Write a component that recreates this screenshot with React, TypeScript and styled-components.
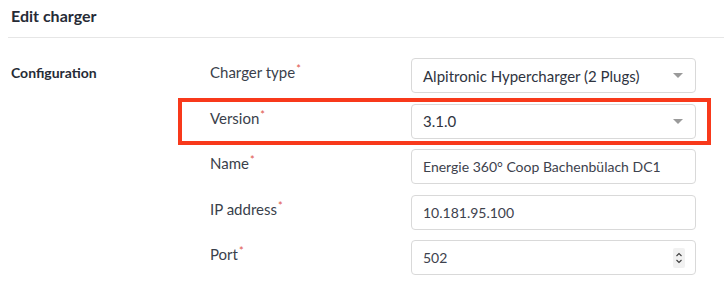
import React from "react";
import styled, { createGlobalStyle, css } from "styled-components";

const Global = createGlobalStyle`
  html, body { margin: 0; padding: 0; background: #ffffff; }
  body { font-family: Lato, "Noto Sans", sans-serif; color: #2a2f3a; }
  * { box-sizing: border-box; }
`;

const Page = styled.div`
  width: 724px;
  height: 289px;
  overflow: hidden;
  background: #fff;
`;

const Header = styled.div`
  margin-left: 8px;
  height: 38px;
  border-bottom: 1px solid #e6e6e6;
  padding: 6px 0 0 3px;
`;

const Title = styled.h1`
  margin: 0;
  font-size: 16px;
  font-weight: 700;
  line-height: 20px;
  color: #262b36;
`;

const Body = styled.div`
  display: grid;
  grid-template-columns: 184px 521px;
  padding-top: 20px;
`;

const SectionTitle = styled.div`
  padding: 6px 0 0 11px;
  font-size: 14px;
  font-weight: 700;
  line-height: 18px;
  color: #262b36;
`;

const Fields = styled.div`
  display: flex;
  flex-direction: column;
  gap: 10.5px;
`;

const Row = styled.div<{ $highlight?: boolean }>`
  display: grid;
  grid-template-columns: 227px 285px;
  height: 35px;
  ${(p) =>
    p.$highlight &&
    css`
      outline: 4px solid #f8391b;
      outline-offset: 2px;
    `}
`;

const Label = styled.label`
  padding: 4px 0 0 26px;
  font-size: 15px;
  line-height: 20px;
  color: #3a3f4b;
`;

const Req = styled.span`
  color: #e0544a;
  font-size: 11px;
  vertical-align: top;
  position: relative;
  top: -3px;
  margin-left: 1px;
`;

const Control = styled.div`
  display: flex;
  align-items: center;
  justify-content: space-between;
  height: 35px;
  border: 1px solid #d9d9d9;
  border-radius: 4px;
  padding: 0 10px 0 11px;
  background: #fff;
`;

const Value = styled.span<{ $size?: number; $muted?: boolean }>`
  font-size: ${(p) => p.$size ?? 15}px;
  color: ${(p) => (p.$muted ? "#3d424d" : "#2f3440")};
  white-space: nowrap;
`;

const Caret = styled.span`
  width: 0;
  height: 0;
  border-left: 5px solid transparent;
  border-right: 5px solid transparent;
  border-top: 5px solid #9a9a9a;
  margin-right: 2px;
`;

const SpinBox = styled.span`
  display: flex;
  align-items: center;
  justify-content: center;
  width: 12px;
  height: 20px;
  border-radius: 2px;
  background: #f1f1f1;
`;

const Spin = () => (
  <SpinBox>
    <svg width="10" height="16" viewBox="0 0 10 16">
      <path d="M2.5 6 L5 3.5 L7.5 6" fill="none" stroke="#3c3c3c" strokeWidth="1.1" />
      <path d="M2.5 10 L5 12.5 L7.5 10" fill="none" stroke="#3c3c3c" strokeWidth="1.1" />
    </svg>
  </SpinBox>
);

type Field = {
  label: string;
  value: string;
  kind: "select" | "text" | "number";
  size?: number;
  highlight?: boolean;
};

const fields: Field[] = [
  { label: "Charger type", value: "Alpitronic Hypercharger (2 Plugs)", kind: "select" },
  { label: "Version", value: "3.1.0", kind: "select", highlight: true },
  { label: "Name", value: "Energie 360° Coop Bachenbülach DC1", kind: "text", size: 14 },
  { label: "IP address", value: "10.181.95.100", kind: "text", size: 14 },
  { label: "Port", value: "502", kind: "number", size: 14 },
];

export default function App() {
  return (
    <Page>
      <Global />
      <Header>
        <Title>Edit charger</Title>
      </Header>
      <Body>
        <SectionTitle>Configuration</SectionTitle>
        <Fields>
          {fields.map((f) => (
            <Row key={f.label} $highlight={f.highlight}>
              <Label>
                {f.label}
                <Req>*</Req>
              </Label>
              <Control>
                <Value $size={f.size} $muted={f.kind !== "select"}>
                  {f.value}
                </Value>
                {f.kind === "select" && <Caret />}
                {f.kind === "number" && <Spin />}
              </Control>
            </Row>
          ))}
        </Fields>
      </Body>
    </Page>
  );
}
